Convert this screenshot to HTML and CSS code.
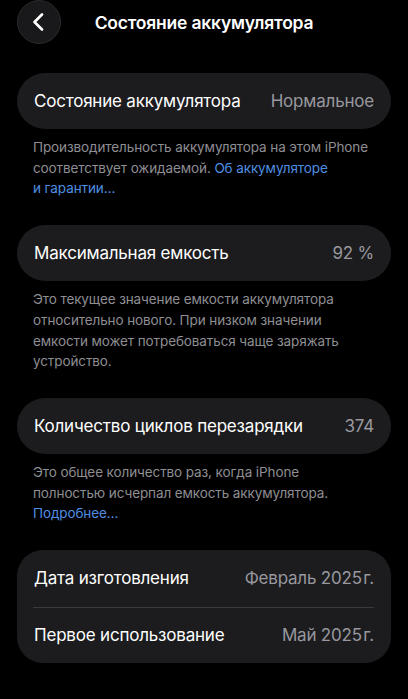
FILE: index.html
```html
<!DOCTYPE html>
<html lang="ru">
<head>
    <meta charset="UTF-8">
    <meta name="viewport" content="width=device-width, initial-scale=1.0">
    <title>Состояние аккумулятора</title>
    <link rel="stylesheet" href="styles.css">
</head>
<body>
    <header class="nav-bar">
        <button class="back-btn" type="button" aria-label="Назад">
            <svg width="12" height="18" viewBox="0 0 12 18">
                <path d="M10 1.5 L2.5 9 L10 16.5" fill="none" stroke="#fff" stroke-width="2.6" stroke-linecap="round" stroke-linejoin="round"/>
            </svg>
        </button>
        <h1 class="nav-title">Состояние аккумулятора</h1>
        <span></span>
    </header>

    <main class="content">
        <section class="group">
            <div class="row">
                <span class="row-label">Состояние аккумулятора</span>
                <span class="row-value">Нормальное</span>
            </div>
        </section>
        <p class="footnote">Производительность аккумулятора на этом iPhone<br>соответствует ожидаемой. <a href="#">Об аккумуляторе<br>и гарантии…</a></p>

        <section class="group">
            <div class="row">
                <span class="row-label">Максимальная емкость</span>
                <span class="row-value">92&nbsp;%</span>
            </div>
        </section>
        <p class="footnote">Это текущее значение емкости аккумулятора<br>относительно нового. При низком значении<br>емкости может потребоваться чаще заряжать<br>устройство.</p>

        <section class="group">
            <div class="row">
                <span class="row-label">Количество циклов перезарядки</span>
                <span class="row-value">374</span>
            </div>
        </section>
        <p class="footnote">Это общее количество раз, когда iPhone<br>полностью исчерпал емкость аккумулятора.<br><a href="#">Подробнее…</a></p>

        <section class="group group-list">
            <div class="row">
                <span class="row-label">Дата изготовления</span>
                <span class="row-value">Февраль 2025&#8202;г.</span>
            </div>
            <div class="row">
                <span class="row-label">Первое использование</span>
                <span class="row-value">Май 2025&#8202;г.</span>
            </div>
        </section>
    </main>
</body>
</html>
```

FILE: styles.css
```css
body {
    margin: 0;
    background-color: #000;
    color: #fff;
    font-family: Inter, "Noto Sans", sans-serif;
    -webkit-font-smoothing: antialiased;
}
.nav-bar {
    display: grid;
    grid-template-columns: 62px 1fr 62px;
    align-items: center;
    height: 42px;
    padding: 0 17px;
}
.back-btn {
    width: 44px;
    height: 44px;
    border-radius: 50%;
    border: 1px solid #2a2a2c;
    background-color: #19191b;
    display: flex;
    align-items: center;
    justify-content: center;
    padding: 0 2px 0 0;
    cursor: pointer;
}
.nav-title {
    margin: 0;
    text-align: center;
    font-size: 17.5px;
    font-weight: 600;
    letter-spacing: -0.2px;
}
.content {
    padding: 31px 17px 0;
}
.group {
    background-color: #1c1c1e;
    border-radius: 28px;
}
.group-list {
    border-radius: 26px;
}
.row {
    display: flex;
    justify-content: space-between;
    align-items: center;
    height: 56px;
    padding: 0 17px;
    font-size: 17px;
    letter-spacing: -0.2px;
}
.group-list .row {
    height: 56.5px;
}
.group-list .row + .row {
    position: relative;
}
.group-list .row + .row::before {
    content: "";
    position: absolute;
    top: 0;
    left: 16px;
    right: 17px;
    height: 1px;
    background-color: #3a3a3c;
}
.row-value {
    color: #98989e;
}
.footnote {
    margin: 8px 0 26px;
    padding: 0 16px;
    font-size: 13.5px;
    line-height: 20.7px;
    color: #8e8e93;
    letter-spacing: -0.1px;
}
.footnote a {
    color: #4f8fe3;
    text-decoration: none;
}
```
